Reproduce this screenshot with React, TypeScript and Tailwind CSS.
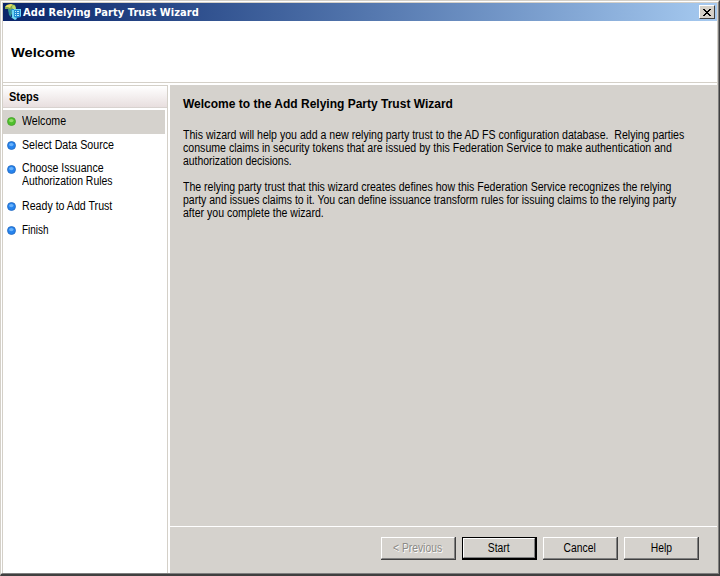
import React from "react";

const steps = [
  { lines: [["Welcome", "scale-x-[.885]"]], h: "h-6", active: true },
  { lines: [["Select Data Source", "scale-x-[.89]"]], h: "h-6" },
  { lines: [["Choose Issuance", "scale-x-[.88]"], ["Authorization Rules", "scale-x-[.87]"]], h: "h-[36px]" },
  { lines: [["Ready to Add Trust", "scale-x-[.885]"]], h: "h-6" },
  { lines: [["Finish", "scale-x-[.83]"]], h: "h-6" },
];

const paragraphs = [
  [
    ["This wizard will help you add a new relying party trust to the AD FS configuration database.  Relying parties", "scale-x-[.881]"],
    ["consume claims in security tokens that are issued by this Federation Service to make authentication and", "scale-x-[.883]"],
    ["authorization decisions.", "scale-x-[.867]"],
  ],
  [
    ["The relying party trust that this wizard creates defines how this Federation Service recognizes the relying", "scale-x-[.879]"],
    ["party and issues claims to it. You can define issuance transform rules for issuing claims to the relying party", "scale-x-[.874]"],
    ["after you complete the wizard.", "scale-x-[.879]"],
  ],
];

function Bullet({ active }: { active?: boolean }) {
  return (
    <svg width="9" height="9" viewBox="0 0 9 9" className="shrink-0">
      <circle cx="4.5" cy="4.5" r="4" fill={active ? "#4fbf2c" : "#2583ee"} stroke={active ? "#46a02c" : "#2468bd"} strokeWidth="0.8" />
      <ellipse cx="4.3" cy="3.6" rx="2.2" ry="1.6" fill={active ? "#8fdc66" : "#69b2fb"} />
    </svg>
  );
}

function WizardIcon() {
  return (
    <svg width="18" height="18" viewBox="0 0 18 18" className="shrink-0">
      <path d="M0 4 2 2l4-1 4 1 1 3-3 4-2 3-2-3-1-3H0z" fill="#7fa84f" />
      <path d="M0 4 2 2l4-1 2 1-2 1-1 2-2-1z" fill="#e9dc60" />
      <path d="m8 2 2 1 1 3H8L7 4z" fill="#b9d76b" />
      <path d="m3 6 3 1v7L4 12z" fill="#2f9597" />
      <path d="M6 6h10v8l-4 1-1 2-4-2z" fill="#238bd2" />
      <path d="M7 7h2v7H7zM9 6h7v1H9zM15 7h1v6h-1z" fill="#6fd6f4" />
      <path d="M10 8.5h1m1 0h2M10 10.5h1m1 0h2M10 12.5h1m1 0h2" stroke="#bdeeff" />
      <path d="m6 14 4 3 2-2-3-1z" fill="#75d9eb" />
    </svg>
  );
}

function Button({ label, kind }: { label: string; kind?: "disabled" | "default" }) {
  return (
    <button
      type="button"
      disabled={kind === "disabled"}
      className={
        kind === "default"
          ? "h-[23px] w-[75px] border border-r-2 border-b-2 border-black p-0"
          : "h-[23px] w-[75px] border-r border-b border-[#404040] p-0"
      }
    >
      <span className="flex h-full w-full items-center justify-center border border-t-white border-r-[#808080] border-b-[#808080] border-l-white">
        <span
          className={
            kind === "disabled"
              ? "scale-x-[.86] whitespace-pre text-[#8b8a86] [text-shadow:1px_1px_0_#fff]"
              : "scale-x-[.86] whitespace-pre"
          }
        >
          {label}
        </span>
      </span>
    </button>
  );
}

export default function App() {
  return (
    <div className="flex h-[576px] w-[720px] flex-col overflow-hidden border-t border-r border-b-2 border-l border-t-[#d4d0c8] border-r-[#404040] border-b-[#404040] border-l-[#d4d0c8] bg-[#d5d2cd] font-['Liberation_Sans',Arial,sans-serif] text-[12px] leading-[13px] text-black">
      <div className="flex min-h-0 flex-1 flex-col border border-t-white border-r-[#808080] border-b-[#808080] border-l-white">
        <div className="flex min-h-0 flex-1 flex-col border-t border-r border-l border-[#d4d0c8]">
          <header className="flex h-[18px] shrink-0 items-center bg-linear-to-r from-[#0a246a] to-[#a6caf0] pr-[2px] pl-[2px]">
            <WizardIcon />
            <span className="font-['DejaVu_Sans_Condensed','DejaVu_Sans',sans-serif] text-[11px] font-bold tracking-[0.07px] whitespace-pre text-white">
              Add Relying Party Trust Wizard
            </span>
            <button
              type="button"
              aria-label="Close"
              className="ml-auto flex h-[14px] w-4 items-center justify-center border border-t-white border-r-[#404040] border-b-[#404040] border-l-white bg-[#d4d0c8] p-0"
            >
              <svg width="8" height="7" viewBox="0 0 8 7" shapeRendering="crispEdges">
                <path d="M0 0h2v1h1v1h2V1h1V0h2v1H7v1H6v1H5v1h1v1h1v1h1v1H6V6H5V5H3v1H2v1H0V6h1V5h1V4h1V3H2V2H1V1H0z" />
              </svg>
            </button>
          </header>
          <div className="flex h-[62px] shrink-0 items-center border-b border-[#d4d0c8] bg-white pt-px pl-2 text-[13px] font-bold">
            <h1 className="origin-left scale-x-[1.13]">Welcome</h1>
          </div>
          <div className="h-[2px] shrink-0 bg-white" />
          <div className="flex min-h-0 flex-1">
            <aside className="flex w-[165px] shrink-0 flex-col border-t border-r border-[#d4d0c8] bg-white">
              <h2 className="flex h-[22px] items-center border-b border-[#d8d2cf] bg-linear-to-b from-white to-[#e8dfdf] pt-[2px] pl-[6px] font-bold">
                <span className="origin-left scale-x-[.91]">Steps</span>
              </h2>
              <nav className="mt-[2px] mr-[2px]">
                {steps.map((s) => (
                  <div
                    key={s.lines[0][0]}
                    className={`flex ${s.h} pl-1 ${s.active ? "bg-[#d5d2cd]" : ""} ${s.lines.length > 1 ? "mb-[1px] pt-[4px]" : "pt-[5px]"}`}
                  >
                    <div className={s.lines.length > 1 ? "mt-[3px]" : "mt-[2px]"}>
                      <Bullet active={s.active} />
                    </div>
                    <div className="ml-[6px] whitespace-pre">
                      {s.lines.map(([text, scale]) => (
                        <div key={text} className={`origin-left ${scale}`}>{text}</div>
                      ))}
                    </div>
                  </div>
                ))}
              </nav>
            </aside>
            <div className="w-[2px] shrink-0 bg-white" />
            <main className="flex min-w-0 flex-1 flex-col">
              <section className="flex flex-1 flex-col items-start pt-[13px] pl-[13px] whitespace-pre">
                <h2 className="mb-[5px] font-bold">Welcome to the Add Relying Party Trust Wizard</h2>
                {paragraphs.map((lines) => (
                  <div key={lines[0][0]} className="mt-[13px]">
                    {lines.map(([text, scale]) => (
                      <p key={text} className={`w-max origin-left ${scale}`}>{text}</p>
                    ))}
                  </div>
                ))}
              </section>
              <footer className="flex h-[47px] shrink-0 justify-end gap-[6px] border-t border-white pt-[10px] pr-[18px]">
                <Button label="< Previous" kind="disabled" />
                <Button label="Start" kind="default" />
                <Button label="Cancel" />
                <Button label="Help" />
              </footer>
            </main>
          </div>
        </div>
      </div>
    </div>
  );
}
